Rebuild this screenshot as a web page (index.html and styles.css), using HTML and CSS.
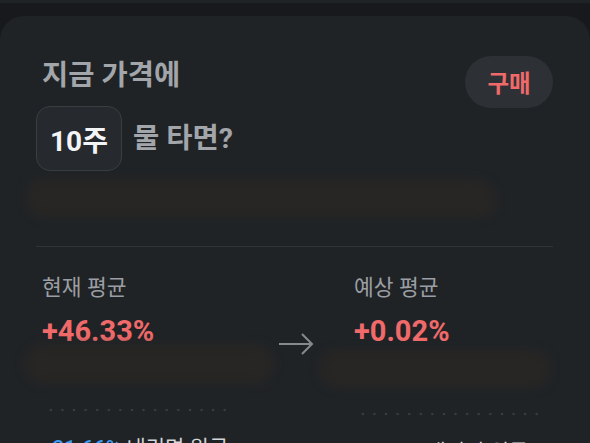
FILE: index.html
```html
<!DOCTYPE html>
<html lang="ko">
<head>
<meta charset="UTF-8">
<meta name="viewport" content="width=device-width, initial-scale=1.0">
<title>물타기 계산</title>
<link rel="stylesheet" href="styles.css">
</head>
<body>
<div class="prev-card"></div>
<div class="card">
  <div class="head">
    <div class="head-text">
      <h1 class="title">지금 가격에</h1>
      <div class="qty-row">
        <span class="qty">10주</span>
        <span class="title">물 타면?</span>
      </div>
    </div>
    <button class="buy">구매</button>
  </div>
  <div class="redact redact-top"></div>
  <hr class="divider">

  <div class="compare">
    <div class="col">
      <p class="label">현재 평균</p>
      <p class="value">+46.33%</p>
      <div class="redact redact-left"></div>
      <div class="dots"></div>
      <p class="note"><span class="down">-21.66%</span> 내리면 원금</p>
    </div>
    <div class="arrow">
      <svg width="36" height="24" viewBox="0 0 36 24">
        <path d="M1 12 H34 M24 2 L34 12 L24 22" fill="none" stroke="#86898d" stroke-width="2"/>
      </svg>
    </div>
    <div class="col">
      <p class="label">예상 평균</p>
      <p class="value">+0.02%</p>
      <div class="redact redact-right"></div>
      <div class="dots"></div>
      <p class="note"><span class="down">-0.02%</span> 내리면 원금</p>
    </div>
  </div>
</div>
</body>
</html>
```

FILE: styles.css
```css
* {
  margin: 0;
  padding: 0;
  box-sizing: border-box;
}
body {
  background-color: #17191c;
  font-family: Roboto, "Noto Sans CJK KR", sans-serif;
  overflow: hidden;
}
.prev-card {
  height: 3px;
  background-color: #202326;
}
.card {
  margin-top: 13px;
  background-color: #202326;
  border-radius: 24px 24px 0 0;
  padding: 40px 37px 40px 36px;
  min-height: 600px;
}
.head {
  display: flex;
  justify-content: space-between;
  align-items: flex-start;
}
.title {
  font-size: 28.5px;
  line-height: 40px;
  font-weight: 700;
  color: #a2a5a9;
  padding-left: 6px;
}
.qty-row {
  display: flex;
  align-items: center;
  gap: 11px;
  margin-top: 10px;
}
.qty-row .title {
  padding-left: 0;
}
.qty {
  display: flex;
  align-items: center;
  height: 65px;
  padding: 0 13px;
  border: 1px solid #3a3d41;
  border-radius: 14px;
  background-color: #26292d;
  color: #f3f4f6;
  font-size: 28px;
  font-weight: 700;
}
.buy {
  width: 88px;
  height: 52px;
  border: none;
  border-radius: 26px;
  background-color: #2d3034;
  color: #f06a6a;
  font-family: inherit;
  font-size: 23.5px;
  font-weight: 700;
}
.redact {
  background-color: #282624;
  border-radius: 20px;
  filter: blur(5px);
}
.redact-top {
  margin: 9px 0 0 -8px;
  width: 468px;
  height: 36px;
  border-radius: 14px 30px 20px 20px;
}
.divider {
  border: none;
  border-top: 1px solid #303337;
  margin-top: 30px;
}
.compare {
  display: grid;
  grid-template-columns: 196px 116px 1fr;
  padding-left: 6px;
  margin-top: 27px;
}
.label {
  font-size: 21.5px;
  line-height: 28px;
  color: #9b9ea3;
}
.value {
  margin-top: 11px;
  font-size: 29px;
  line-height: 36px;
  font-weight: 700;
  color: #f06a6a;
}
.redact-left {
  margin: -4px 0 0 -17px;
  width: 248px;
  height: 38px;
}
.redact-right {
  margin: 2px 0 0 -34px;
  width: 230px;
  height: 36px;
}
.dots {
  margin: 25px 0 0 3px;
  width: 188px;
  height: 4px;
  background-image: radial-gradient(circle, #393c40 1px, transparent 1.6px);
  background-size: 11.6px 4px;
}
.note {
  margin: 22px 0 0 3px;
  font-size: 21px;
  line-height: 28px;
  color: #d3d5d8;
}
.down {
  color: #3f9cf0;
  font-weight: 500;
}
.arrow {
  display: flex;
  justify-content: center;
  padding-top: 58px;
}
```
